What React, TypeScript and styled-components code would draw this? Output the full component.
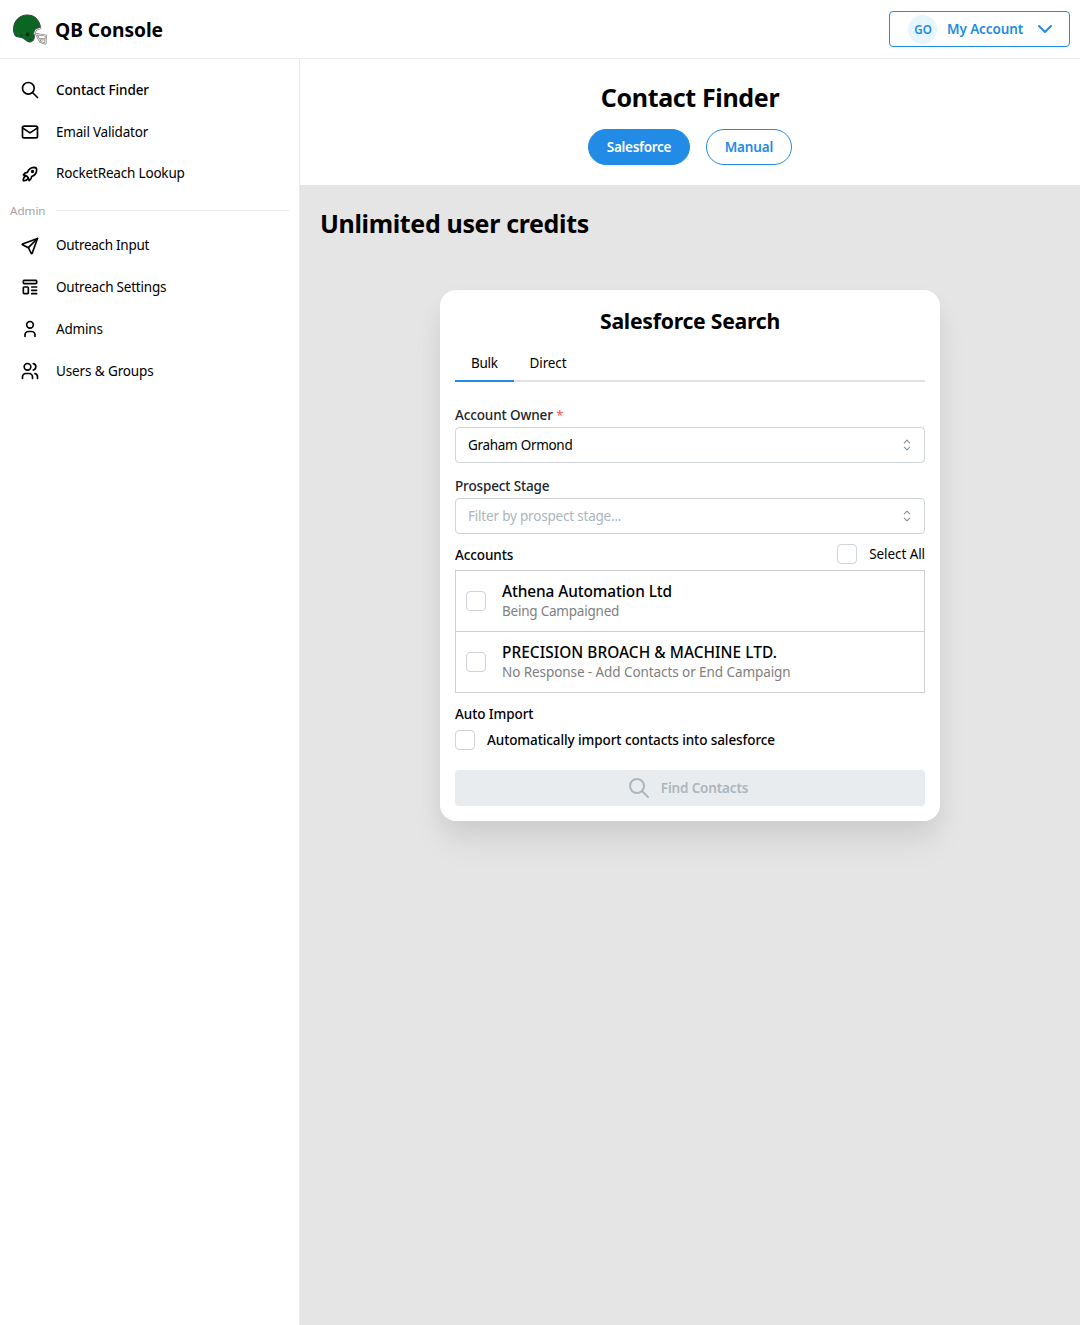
import React from 'react';
import styled, { createGlobalStyle } from 'styled-components';

const BLUE = '#228be6';
const BORDER = '#ced4da';

const GlobalStyle = createGlobalStyle`
  * { box-sizing: border-box; }
  body {
    margin: 0;
    background: #fff;
    color: #000;
    font-family: "Segoe UI", "Noto Sans", "Open Sans", sans-serif;
    font-size: 13.5px;
    line-height: 1.55;
  }
  h1, h2, p { margin: 0; }
  button { font: inherit; cursor: pointer; }
`;

const Page = styled.div`
  min-height: 1325px;
  display: flex;
  flex-direction: column;
`;

const TopBar = styled.header`
  height: 59px;
  padding: 0 10px 0 12px;
  display: flex;
  align-items: center;
  justify-content: space-between;
  border-bottom: 1px solid #e9ecef;
`;

const Brand = styled.div`
  display: flex;
  align-items: center;
  gap: 7px;
  font-size: 19.2px;
  font-weight: 700;
  padding-top: 1px;
`;

const Text = styled.span<{ $track?: number }>`
  white-space: nowrap;
  letter-spacing: ${(p) => p.$track ?? 0}px;
`;

const AccountButton = styled.button`
  width: 181px;
  height: 36px;
  padding: 0 12px 0 18px;
  display: flex;
  align-items: center;
  background: #fff;
  color: ${BLUE};
  font-weight: 600;
  border: 1px solid ${BLUE};
  border-radius: 4px;
`;

const Avatar = styled.span`
  width: 29px;
  height: 29px;
  margin-right: 10px;
  padding: 1px 0 0 1px;
  display: flex;
  align-items: center;
  justify-content: center;
  border-radius: 50%;
  background: #e7f5ff;
  font-size: 11.6px;
`;

const Spacer = styled.span`
  flex: 1;
`;

const Body = styled.div`
  flex: 1;
  display: flex;
`;

const Sidebar = styled.nav`
  width: 300px;
  padding-top: 10px;
  border-right: 1px solid #e9ecef;
`;

const NavGroup = styled.div`
  display: grid;
`;

const MainNav = styled(NavGroup)`
  grid-template-rows: 42px 42px 41px;
`;

const AdminNav = styled(NavGroup)`
  grid-template-rows: 41px 42px 42px 42px;
`;

const NavItem = styled.a<{ $active?: boolean }>`
  padding-left: 20px;
  display: flex;
  align-items: center;
  gap: 16px;
  font-weight: ${(p) => (p.$active ? 500 : 400)};
`;

const NavDivider = styled.div`
  height: 31px;
  padding: 2px 10px 0;
  display: flex;
  align-items: center;
  gap: 10px;
  font-size: 11.6px;
  color: #a3a3a3;

  &::after {
    content: '';
    flex: 1;
    height: 1px;
    background: #e9ecef;
  }
`;

const Main = styled.main`
  flex: 1;
  display: flex;
  flex-direction: column;
  background: #e5e5e5;
`;

const PageHead = styled.section`
  height: 126px;
  padding-top: 18px;
  display: flex;
  flex-direction: column;
  align-items: center;
  gap: 12px;
  background: #fff;
`;

const Title = styled.h1`
  font-size: 25px;
  line-height: 40px;
  font-weight: 700;
  letter-spacing: -0.35px;
`;

const Pills = styled.div`
  display: flex;
  gap: 16px;
`;

const Pill = styled.button<{ $filled?: boolean; $width: number }>`
  width: ${(p) => p.$width}px;
  height: 36px;
  padding: 0;
  border: 1px solid ${BLUE};
  border-radius: 18px;
  background: ${(p) => (p.$filled ? BLUE : '#fff')};
  color: ${(p) => (p.$filled ? '#fff' : BLUE)};
  font-weight: 600;
`;

const Content = styled.section`
  padding: 18px 20px;
  display: flex;
  flex-direction: column;
`;

const Card = styled.div`
  width: 500px;
  height: 531px;
  margin: 47px auto 0;
  padding: 11px 15px 15px;
  display: flex;
  flex-direction: column;
  background: #fff;
  border-radius: 16px;
  box-shadow: 0 24px 36px -4px rgba(0, 0, 0, 0.07), 0 10px 24px rgba(0, 0, 0, 0.05);
`;

const CardTitle = styled.h2`
  font-size: 21.2px;
  line-height: 40px;
  font-weight: 700;
  letter-spacing: -0.25px;
  text-align: center;
`;

const Tabs = styled.div`
  height: 37px;
  margin: 4px 0 22px;
  display: flex;
  border-bottom: 2px solid #dee2e6;
`;

const Tab = styled.div<{ $active?: boolean }>`
  height: 37px;
  padding: 8px 15.9px 0 16px;
  border-bottom: 2px solid ${(p) => (p.$active ? BLUE : 'transparent')};
`;

const Field = styled.div`
  margin-bottom: 12px;
`;

const Label = styled.div`
  height: 23px;
  line-height: 22px;
  font-weight: 500;
  color: #212529;
`;

const Required = styled.span`
  color: #fa5252;
  font-size: 13px;
  font-weight: 400;
`;

const SelectBox = styled.div<{ $empty?: boolean }>`
  height: 36px;
  padding: 0 12px;
  display: flex;
  align-items: center;
  justify-content: space-between;
  border: 1px solid ${BORDER};
  border-radius: 4px;
  color: ${(p) => (p.$empty ? '#adb5bd' : '#000')};
`;

const AccountsHead = styled.div`
  height: 20px;
  margin: -2px 0 6px;
  display: flex;
  align-items: center;
  justify-content: space-between;
  font-weight: 500;
`;

const AccountsTitle = styled(Text)`
  padding-top: 2px;
`;

const CheckRow = styled.label<{ $strong?: boolean }>`
  display: flex;
  align-items: center;
  gap: 12px;
  line-height: 20px;
  font-weight: ${(p) => (p.$strong ? 500 : 400)};
`;

const Checkbox = styled.input.attrs({ type: 'checkbox' })`
  appearance: none;
  flex: none;
  width: 20px;
  height: 20px;
  margin: 0;
  border: 1px solid ${BORDER};
  border-radius: 4px;
  background: #fff;
`;

const AccountList = styled.div`
  border: 1px solid #d0d0d0;
`;

const AccountRow = styled.label`
  height: 60px;
  padding: 0 10px;
  display: flex;
  align-items: center;
  gap: 16px;

  & + & {
    height: 61px;
    border-top: 1px solid #d0d0d0;
  }
`;

const AccountInfo = styled.div`
  display: flex;
  flex-direction: column;
`;

const AccountName = styled(Text)`
  font-size: 15.4px;
  line-height: 20px;
  font-weight: 500;
`;

const AccountStage = styled(Text)`
  line-height: 19px;
  color: #808080;
`;

const GroupLabel = styled.div`
  height: 37px;
  padding-top: 11px;
  line-height: 21px;
  font-weight: 500;
`;

const FindButton = styled.button`
  height: 36px;
  margin-top: 20px;
  padding: 0 5px 0 0;
  display: flex;
  align-items: center;
  justify-content: center;
  gap: 10px;
  border: 0;
  border-radius: 4px;
  background: #e9ecef;
  color: #adb5bd;
  font-weight: 600;
`;

const Svg = styled.svg`
  flex: none;
  display: block;
  fill: none;
  stroke: currentColor;
  stroke-width: 2;
  stroke-linecap: round;
  stroke-linejoin: round;
`;

const ICONS: Record<string, string[]> = {
  search: ['M3 10a7 7 0 1 0 14 0a7 7 0 1 0 -14 0', 'M21 21l-6 -6'],
  mail: [
    'M5 5h14a2 2 0 0 1 2 2v10a2 2 0 0 1 -2 2h-14a2 2 0 0 1 -2 -2v-10a2 2 0 0 1 2 -2z',
    'M3 7l9 6l9 -6',
  ],
  rocket: [
    'M4 13a8 8 0 0 1 7 7a6 6 0 0 0 3 -5a9 9 0 0 0 6 -8a3 3 0 0 0 -3 -3a9 9 0 0 0 -8 6a6 6 0 0 0 -5 3',
    'M7 14a6 6 0 0 0 -3 6a6 6 0 0 0 6 -3',
    'M14 9a1 1 0 1 0 2 0a1 1 0 1 0 -2 0',
  ],
  send: [
    'M10 14l11 -11',
    'M21 3l-6.5 18a.55 .55 0 0 1 -1 0l-3.5 -7l-7 -3.5a.55 .55 0 0 1 0 -1l18 -6.5',
  ],
  template: [
    'M5 4h14a1 1 0 0 1 1 1v2a1 1 0 0 1 -1 1h-14a1 1 0 0 1 -1 -1v-2a1 1 0 0 1 1 -1z',
    'M5 12h4a1 1 0 0 1 1 1v6a1 1 0 0 1 -1 1h-4a1 1 0 0 1 -1 -1v-6a1 1 0 0 1 1 -1z',
    'M14 12h6',
    'M14 16h6',
    'M14 20h6',
  ],
  user: ['M8 7a4 4 0 1 0 8 0a4 4 0 1 0 -8 0', 'M6 21v-2a4 4 0 0 1 4 -4h4a4 4 0 0 1 4 4v2'],
  users: [
    'M5 7a4 4 0 1 0 8 0a4 4 0 1 0 -8 0',
    'M3 21v-2a4 4 0 0 1 4 -4h4a4 4 0 0 1 4 4v2',
    'M16 3.13a4 4 0 0 1 0 7.75',
    'M21 21v-2a4 4 0 0 0 -3 -3.85',
  ],
  chevron: ['M6 9l6 6l6 -6'],
};

function Icon({ name, size = 20 }: { name: string; size?: number }) {
  return (
    <Svg width={size} height={size} viewBox="0 0 24 24">
      {ICONS[name].map((d) => (
        <path key={d} d={d} />
      ))}
    </Svg>
  );
}

const SelectorSvg = styled.svg`
  flex: none;
  display: block;
  fill: none;
  stroke: #868e96;
  stroke-width: 1.1;
  stroke-linecap: round;
  stroke-linejoin: round;
`;

function Selector() {
  return (
    <SelectorSvg width="10" height="12" viewBox="0 0 10 12">
      <path d="M2.3 3.8L5 1.2l2.7 2.6M2.3 8.2L5 10.8l2.7-2.6" />
    </SelectorSvg>
  );
}

function Helmet() {
  return (
    <svg width="36" height="32" viewBox="0 0 36 32">
      <path
        d="M3.6 22.2C1.7 19.6 1.4 16.8 1.6 13.8C2.3 6 8 1 15.2 1C22.4 1 27 5 28.6 13.6L23.6 15.4L22 18.4L22.4 23.4C21.8 26.8 19.6 28.4 17 27.9C14.4 27.4 13 25.2 10.6 24C8 22.8 5.4 23.2 3.6 22.2Z"
        fill="#0b6623"
        stroke="#39423b"
        strokeWidth="1"
      />
      <circle cx="15.6" cy="20.4" r="1.9" fill="#122016" />
      <circle cx="9.4" cy="21.6" r=".6" fill="#122016" />
      <circle cx="18.6" cy="25.2" r=".6" fill="#122016" />
      <g fill="none" strokeLinejoin="round" strokeLinecap="round">
        <path
          d="M28.4 14.2L23.8 15.8L22.2 19.8L34 21.6L33.4 29.6L28.2 27.8L24.6 20.8M27 25.2H33.4"
          stroke="#6a6a6a"
          strokeWidth="1.9"
        />
        <path
          d="M28.4 14.2L23.8 15.8L22.2 19.8L34 21.6L33.4 29.6L28.2 27.8L24.6 20.8M27 25.2H33.4"
          stroke="#ededed"
          strokeWidth=".9"
        />
      </g>
    </svg>
  );
}

type NavEntry = { icon: string; label: string; track: number; active?: boolean };

const NAV: NavEntry[] = [
  { icon: 'search', label: 'Contact Finder', track: -0.12, active: true },
  { icon: 'mail', label: 'Email Validator', track: -0.2 },
  { icon: 'rocket', label: 'RocketReach Lookup', track: -0.18 },
];

const ADMIN_NAV: NavEntry[] = [
  { icon: 'send', label: 'Outreach Input', track: -0.28 },
  { icon: 'template', label: 'Outreach Settings', track: -0.22 },
  { icon: 'user', label: 'Admins', track: -0.2 },
  { icon: 'users', label: 'Users & Groups', track: -0.12 },
];

const ACCOUNTS = [
  { name: 'Athena Automation Ltd', track: -0.1, stage: 'Being Campaigned', stageTrack: -0.22 },
  {
    name: 'PRECISION BROACH & MACHINE LTD.',
    track: 0.05,
    stage: 'No Response - Add Contacts or End Campaign',
    stageTrack: -0.08,
  },
];

function NavList({ items }: { items: NavEntry[] }) {
  return (
    <>
      {items.map((item) => (
        <NavItem key={item.label} $active={item.active}>
          <Icon name={item.icon} />
          <Text $track={item.track}>{item.label}</Text>
        </NavItem>
      ))}
    </>
  );
}

export default function App() {
  return (
    <Page>
      <GlobalStyle />
      <TopBar>
        <Brand>
          <Helmet />
          <Text $track={-0.05}>QB Console</Text>
        </Brand>
        <AccountButton>
          <Avatar>GO</Avatar>
          <Text $track={-0.1}>My Account</Text>
          <Spacer />
          <Icon name="chevron" size={24} />
        </AccountButton>
      </TopBar>
      <Body>
        <Sidebar>
          <MainNav>
            <NavList items={NAV} />
          </MainNav>
          <NavDivider>Admin</NavDivider>
          <AdminNav>
            <NavList items={ADMIN_NAV} />
          </AdminNav>
        </Sidebar>
        <Main>
          <PageHead>
            <Title>Contact Finder</Title>
            <Pills>
              <Pill $filled $width={102}>
                <Text $track={-0.3}>Salesforce</Text>
              </Pill>
              <Pill $width={86}>
                <Text $track={-0.12}>Manual</Text>
              </Pill>
            </Pills>
          </PageHead>
          <Content>
            <Title as="h2">Unlimited user credits</Title>
            <Card>
              <CardTitle>Salesforce Search</CardTitle>
              <Tabs>
                <Tab $active>
                  <Text $track={-0.3}>Bulk</Text>
                </Tab>
                <Tab>
                  <Text $track={-0.1}>Direct</Text>
                </Tab>
              </Tabs>
              <Field>
                <Label>
                  <Text $track={-0.12}>Account Owner</Text> <Required>*</Required>
                </Label>
                <SelectBox>
                  <Text $track={-0.3}>Graham Ormond</Text>
                  <Selector />
                </SelectBox>
              </Field>
              <Field>
                <Label>
                  <Text $track={-0.14}>Prospect Stage</Text>
                </Label>
                <SelectBox $empty>
                  <Text $track={-0.2}>Filter by prospect stage...</Text>
                  <Selector />
                </SelectBox>
              </Field>
              <AccountsHead>
                <AccountsTitle $track={-0.1}>Accounts</AccountsTitle>
                <CheckRow>
                  <Checkbox />
                  <Text $track={-0.08}>Select All</Text>
                </CheckRow>
              </AccountsHead>
              <AccountList>
                {ACCOUNTS.map((a) => (
                  <AccountRow key={a.name}>
                    <Checkbox />
                    <AccountInfo>
                      <AccountName $track={a.track}>{a.name}</AccountName>
                      <AccountStage $track={a.stageTrack}>{a.stage}</AccountStage>
                    </AccountInfo>
                  </AccountRow>
                ))}
              </AccountList>
              <GroupLabel>
                <Text $track={-0.08}>Auto Import</Text>
              </GroupLabel>
              <CheckRow $strong>
                <Checkbox />
                <Text $track={-0.09}>Automatically import contacts into salesforce</Text>
              </CheckRow>
              <FindButton>
                <Icon name="search" size={24} />
                <Text $track={-0.16}>Find Contacts</Text>
              </FindButton>
            </Card>
          </Content>
        </Main>
      </Body>
    </Page>
  );
}
